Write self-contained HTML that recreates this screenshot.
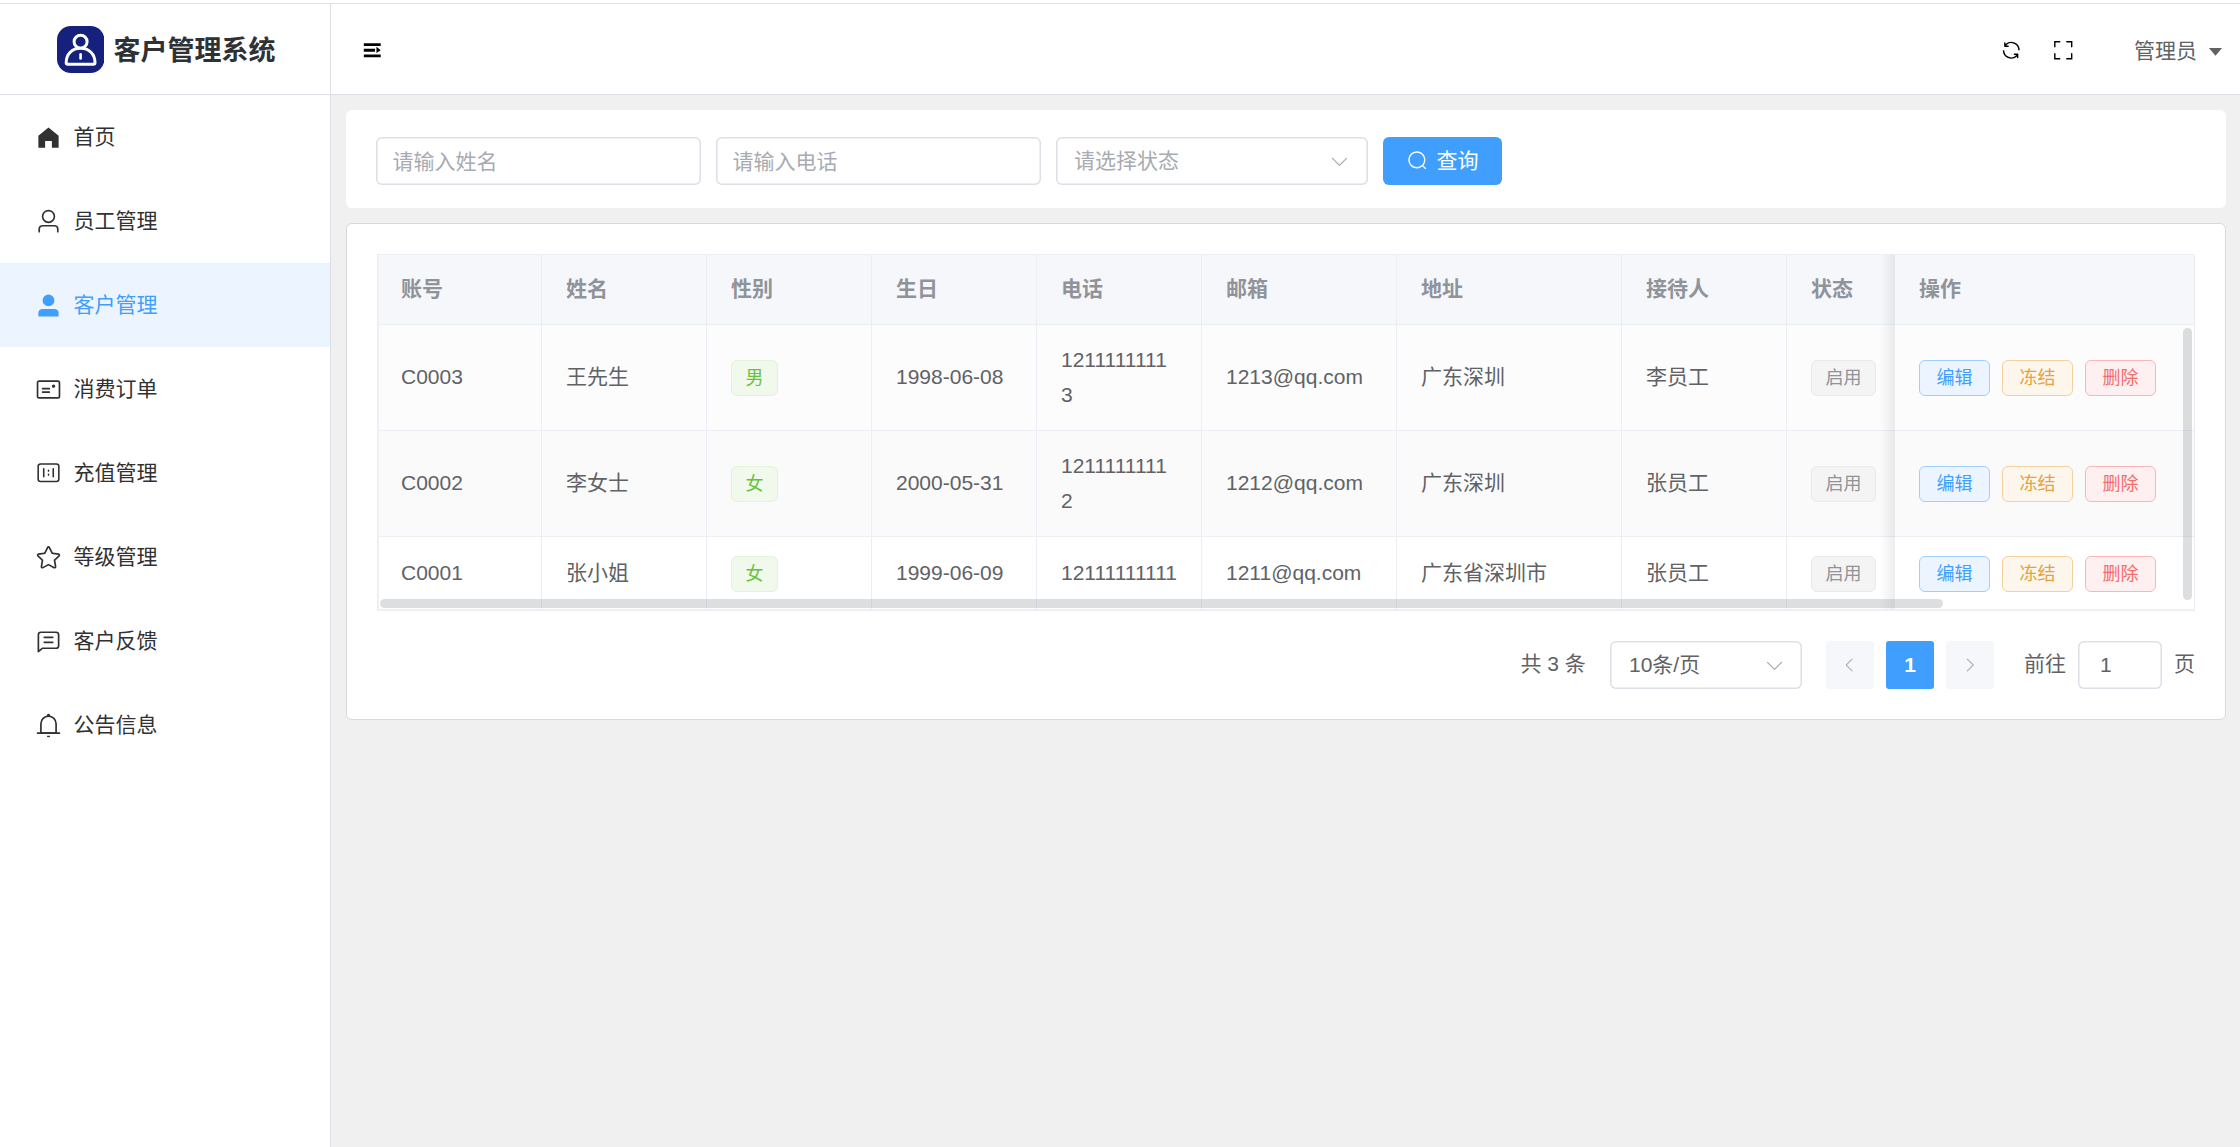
<!DOCTYPE html>
<html lang="zh-CN">
<head>
<meta charset="utf-8">
<title>客户管理系统</title>
<style>
*{box-sizing:border-box;margin:0;padding:0}
html,body{width:2240px;height:1147px;overflow:hidden;background:#fff}
body{font-family:"Liberation Sans","Noto Sans CJK SC",sans-serif;font-size:21px;color:#606266;position:relative}
.abs{position:absolute}
#topline{left:0;top:3px;width:2240px;height:1px;background:#dcdfe6}
#aside{left:0;top:4px;width:331px;height:1143px;background:#fff;border-right:1px solid #dcdfe6}
#logo{left:0;top:0;width:330px;height:91px;border-bottom:1px solid #dcdfe6}
#logo .ico{left:57px;top:21.9px}
#logo .tt{left:113.5px;top:25.5px;font-size:27px;line-height:42px;font-weight:700;color:#303133;white-space:nowrap;letter-spacing:0}
.mi{left:0;width:330px;height:84px;font-size:21px;color:#303133;line-height:84px}
.mi svg{position:absolute;left:35px;top:29px;width:27px;height:27px;fill:currentColor}
.mi span{position:absolute;left:73.5px;top:0px;white-space:nowrap}
.mi.on{background:#ecf5ff;color:#409eff}
#header{left:331px;top:4px;width:1909px;height:91px;background:#fff;border-bottom:1px solid #dcdfe6}
.hi{fill:#000}
#main{left:331px;top:95px;width:1909px;height:1052px;background:#f0f0f0}

#content{left:0;top:0;width:2240px;height:1147px}
.card1{left:346px;top:110px;width:1880px;height:98px;background:#fff;border-radius:6px}
.card2{left:346px;top:223px;width:1880px;height:497px;background:#fff;border:1px solid #d9d9d9;border-radius:6px}
.inp{height:48px;top:137px;box-shadow:inset 0 0 0 1.5px #dcdfe6;border-radius:6px;background:#fff;color:#a8abb2;font-size:21px;line-height:48px;padding-top:1px;padding-left:16.5px;white-space:nowrap}
.btn{left:1383px;top:137px;width:119px;height:48px;border-radius:6px;background:#409eff;color:#fff}
.btn span{position:absolute;left:53.5px;top:0;line-height:48px;font-size:21px;white-space:nowrap}
.tbl{left:377px;top:254px;width:1818px;height:357px;border:1px solid #ebeef5;background:#fff;overflow:hidden}
.tbl:after{content:"";position:absolute;left:0;top:0;right:0;bottom:0;box-shadow:inset 1px 0 0 #eef0f6,inset 0 -1px 0 #eef0f6;pointer-events:none;z-index:5}
.row{left:-1px;width:1817px;border-bottom:1px solid #ebeef5}
.cell{top:0;height:100%;border-right:1px solid #ebeef5;padding-left:24px;display:flex;align-items:center;line-height:34.5px;font-size:21px;color:#606266;white-space:nowrap}
.hd{background:#f5f7fa}
.hd .cell{font-weight:700;color:#909399}
.tag{display:inline-block;height:36px;line-height:34px;padding:0 13.5px;font-size:18px;border-radius:6px;border:1px solid;white-space:nowrap;position:relative;top:0}
.tg{background:#f0f9eb;border-color:#e1f3d8;color:#67c23a}
.ti{background:#f4f4f5;border-color:#e9e9eb;color:#909399}
.fx{left:1518px;width:300px;border-right:none}
.fx:before{content:"";position:absolute;left:-15px;top:0;width:15px;height:101%;background:linear-gradient(to right,rgba(0,0,0,0),rgba(0,0,0,.07))}
.sb{display:inline-block;width:71px;height:36px;line-height:34px;text-align:center;font-size:18px;border-radius:6px;border:1px solid;margin-right:12px;white-space:nowrap;position:relative;top:0}
.bp{background:#ecf5ff;border-color:#a0cfff;color:#409eff}
.bw{background:#fdf6ec;border-color:#f3d19e;color:#e6a23c}
.bd{background:#fef0f0;border-color:#fab6b6;color:#f56c6c}
.hbar{left:2px;top:344px;width:1562.5px;height:8.5px;border-radius:5px;background:rgba(144,147,153,.3)}
.vbar{left:1804.5px;top:72.7px;width:9px;height:272px;border-radius:5px;background:rgba(144,147,153,.3)}
.pg{top:640px;height:48px;line-height:47px;font-size:21px;color:#606266;white-space:nowrap}
.pb{top:641px;width:48px;height:48px;border-radius:3px;background:#f5f7fa}
.pb svg{position:absolute;left:15px;top:15px;width:18px;height:18px;fill:#a8abb2}
</style>
</head>
<body>
<div id="topline" class="abs"></div>

<div id="aside" class="abs">
  <div id="logo" class="abs">
    <svg class="ico abs" viewBox="0 0 47.4 47" width="47.4" height="47"><rect x="0" y="0" width="47.4" height="47" rx="14" ry="14" fill="#15217c"/><circle cx="23.6" cy="15.7" r="6.5" fill="none" stroke="#fff" stroke-width="3"/><path d="M11 38.3H36.2a1.8 1.8 0 0 0 1.8-1.8C38 28 32 22.3 23.6 22.3 15 22.3 9.2 28 9.2 36.5a1.8 1.8 0 0 0 1.8 1.8Z" fill="#15217c" stroke="#fff" stroke-width="3" stroke-linejoin="round"/><path d="M23.6 28.2V32.4" stroke="#fff" stroke-width="2.6" stroke-linecap="round"/></svg>
    <div class="tt abs">客户管理系统</div>
  </div>
  <div class="mi abs" style="top:91px"><svg viewBox="0 0 1024 1024"><path d="M512 128 128 447.936V896h255.936V640H640v256h255.936V447.936z"/></svg><span>首页</span></div>
  <div class="mi abs" style="top:175px"><svg viewBox="0 0 1024 1024"><path d="M512 512a192 192 0 1 0 0-384 192 192 0 0 0 0 384m0 64a256 256 0 1 1 0-512 256 256 0 0 1 0 512m320 320v-96a96 96 0 0 0-96-96H288a96 96 0 0 0-96 96v96a32 32 0 1 1-64 0v-96a160 160 0 0 1 160-160h448a160 160 0 0 1 160 160v96a32 32 0 1 1-64 0"/></svg><span>员工管理</span></div>
  <div class="mi abs on" style="top:259px"><svg viewBox="0 0 1024 1024"><path d="M288 320a224 224 0 1 0 448 0 224 224 0 1 0-448 0m544 608H160a32 32 0 0 1-32-32v-96a160 160 0 0 1 160-160h448a160 160 0 0 1 160 160v96a32 32 0 0 1-32 32z"/></svg><span>客户管理</span></div>
  <div class="mi abs" style="top:343px"><svg viewBox="0 0 1024 1024"><path d="M160 224a32 32 0 0 0-32 32v512a32 32 0 0 0 32 32h704a32 32 0 0 0 32-32V256a32 32 0 0 0-32-32zm0-64h704a96 96 0 0 1 96 96v512a96 96 0 0 1-96 96H160a96 96 0 0 1-96-96V256a96 96 0 0 1 96-96"/><path d="M704 320a64 64 0 1 1 0 128 64 64 0 0 1 0-128M288 448h256q32 0 32 32t-32 32H288q-32 0-32-32t32-32m0 128h256q32 0 32 32t-32 32H288q-32 0-32-32t32-32"/></svg><span>消费订单</span></div>
  <div class="mi abs" style="top:427px"><svg viewBox="0 0 1024 1024"><path d="M813.176 180.706a60.235 60.235 0 0 1 60.236 60.235v481.883a60.235 60.235 0 0 1-60.236 60.235H210.824a60.235 60.235 0 0 1-60.236-60.235V240.94a60.235 60.235 0 0 1 60.236-60.235h602.352zm0-60.235H210.824A120.47 120.47 0 0 0 90.353 240.94v481.883a120.47 120.47 0 0 0 120.47 120.47h602.353a120.47 120.47 0 0 0 120.471-120.47V240.94a120.47 120.47 0 0 0-120.47-120.47zm-120.47 180.705a30.118 30.118 0 0 0-30.118 30.118v301.177a30.118 30.118 0 0 0 60.236 0V331.294a30.118 30.118 0 0 0-30.118-30.118zm-361.412 0a30.118 30.118 0 0 0-30.118 30.118v301.177a30.118 30.118 0 1 0 60.236 0V331.294a30.118 30.118 0 0 0-30.118-30.118M512 361.412a30.118 30.118 0 0 0-30.118 30.117v30.118a30.118 30.118 0 0 0 60.236 0V391.53A30.118 30.118 0 0 0 512 361.412M512 512a30.118 30.118 0 0 0-30.118 30.118v30.117a30.118 30.118 0 0 0 60.236 0v-30.117A30.118 30.118 0 0 0 512 512"/></svg><span>充值管理</span></div>
  <div class="mi abs" style="top:511px"><svg viewBox="0 0 1024 1024"><path d="m512 747.84 228.16 119.936a6.4 6.4 0 0 0 9.28-6.72l-43.52-254.08 184.512-179.904a6.4 6.4 0 0 0-3.52-10.88l-255.104-37.12L517.76 147.904a6.4 6.4 0 0 0-11.52 0L392.192 379.072l-255.104 37.12a6.4 6.4 0 0 0-3.52 10.88L318.08 606.976l-43.584 254.08a6.4 6.4 0 0 0 9.28 6.72zM313.6 924.48a70.4 70.4 0 0 1-102.144-74.24l37.888-220.928L88.96 472.96A70.4 70.4 0 0 1 128 352.896l221.76-32.256 99.2-200.96a70.4 70.4 0 0 1 126.208 0l99.2 200.96 221.824 32.256a70.4 70.4 0 0 1 39.04 120.064L774.72 629.376l37.888 220.928a70.4 70.4 0 0 1-102.144 74.24L512 820.096l-198.4 104.32z"/></svg><span>等级管理</span></div>
  <div class="mi abs" style="top:595px"><svg viewBox="0 0 1024 1024"><path d="M160 826.88 273.536 736H800a64 64 0 0 0 64-64V256a64 64 0 0 0-64-64H224a64 64 0 0 0-64 64zM296 800 147.968 918.4A32 32 0 0 1 96 893.44V256a128 128 0 0 1 128-128h576a128 128 0 0 1 128 128v416a128 128 0 0 1-128 128z"/><path d="M352 512h320q32 0 32 32t-32 32H352q-32 0-32-32t32-32m0-192h320q32 0 32 32t-32 32H352q-32 0-32-32t32-32"/></svg><span>客户反馈</span></div>
  <div class="mi abs" style="top:679px"><svg viewBox="0 0 1024 1024"><path d="M512 64a64 64 0 0 1 64 64v64H448v-64a64 64 0 0 1 64-64"/><path d="M256 768h512V448a256 256 0 1 0-512 0zm256-640a320 320 0 0 1 320 320v384H192V448a320 320 0 0 1 320-320"/><path d="M96 768h832q32 0 32 32t-32 32H96q-32 0-32-32t32-32m352 128h128a64 64 0 0 1-128 0"/></svg><span>公告信息</span></div>
</div>

<div id="header" class="abs">
  <svg class="abs hi" style="left:29.95px;top:34.85px;width:22.5px;height:22.5px" viewBox="0 0 1024 1024"><path d="M128 192h768v128H128zm0 256h512v128H128zm0 256h768v128H128zm576-352 192 160-192 128z"/></svg>
  <svg class="abs hi" style="left:1669.05px;top:34.95px;width:22.5px;height:22.5px" viewBox="0 0 1024 1024"><path d="M771.776 794.88A384 384 0 0 1 128 512h64a320 320 0 0 0 555.712 216.448H654.72a32 32 0 1 1 0-64h149.056a32 32 0 0 1 32 32v148.928a32 32 0 1 1-64 0v-50.56zM276.288 295.616h92.992a32 32 0 0 1 0 64H220.16a32 32 0 0 1-32-32V178.56a32 32 0 0 1 64 0v50.56A384 384 0 0 1 896.128 512h-64a320 320 0 0 0-555.776-216.384z"/></svg>
  <svg class="abs hi" style="left:1721.15px;top:35.25px;width:22.5px;height:22.5px" viewBox="0 0 1024 1024"><path d="m160 96.064 192 .192a32 32 0 0 1 0 64l-192-.192V352a32 32 0 0 1-64 0V96h64zm0 831.872V928H96V672a32 32 0 1 1 64 0v191.936l192-.192a32 32 0 1 1 0 64zM864 96.064V96h64v256a32 32 0 1 1-64 0V160.064l-192 .192a32 32 0 1 1 0-64zm0 831.872-192-.192a32 32 0 0 1 0-64l192 .192V672a32 32 0 1 1 64 0v256h-64z"/></svg>
  <div class="abs" style="left:1803px;top:31px;font-size:21px;line-height:32px;color:#606266;white-space:nowrap">管理员</div>
  <svg class="abs" style="left:1874.3px;top:36.1px;width:21px;height:21px;fill:#606266" viewBox="0 0 1024 1024"><path d="m192 384 320 384 320-384z"/></svg>
</div>

<div id="main" class="abs"></div>
<div id="content" class="abs">
  <div class="card1 abs"></div>
  <div class="inp abs" style="left:376px;width:325px">请输入姓名</div>
  <div class="inp abs" style="left:716px;width:325px">请输入电话</div>
  <div class="inp abs" style="left:1056px;width:312px;padding-left:18px;padding-top:0">请选择状态</div>
  <svg class="abs" style="left:1329px;top:151.2px;width:21px;height:21px;fill:#a8abb2" viewBox="0 0 1024 1024"><path d="M831.872 340.864 512 652.672 192.128 340.864a30.592 30.592 0 0 0-42.752 0 29.12 29.12 0 0 0 0 41.6L489.664 714.24a32 32 0 0 0 44.672 0l340.288-331.712a29.12 29.12 0 0 0 0-41.728 30.592 30.592 0 0 0-42.752 0z"/></svg>
  <div class="btn abs"><svg class="abs" style="left:24px;top:13px;width:21px;height:21px;fill:#fff" viewBox="0 0 1024 1024"><path d="m795.904 750.72 124.992 124.928a32 32 0 0 1-45.248 45.248L750.656 795.904a416 416 0 1 1 45.248-45.248zM480 832a352 352 0 1 0 0-704 352 352 0 0 0 0 704"/></svg><span>查询</span></div>
  <div class="card2 abs"></div>
  <div class="tbl abs">
<div class="row hd abs" style="top:0;height:70px">
<div class="cell abs" style="left:0px;width:165px">账号</div>
<div class="cell abs" style="left:165px;width:165px">姓名</div>
<div class="cell abs" style="left:330px;width:165px">性别</div>
<div class="cell abs" style="left:495px;width:165px">生日</div>
<div class="cell abs" style="left:660px;width:165px">电话</div>
<div class="cell abs" style="left:825px;width:195px">邮箱</div>
<div class="cell abs" style="left:1020px;width:225px">地址</div>
<div class="cell abs" style="left:1245px;width:165px">接待人</div>
<div class="cell abs" style="left:1410px;width:165px">状态</div>
<div class="cell abs fx hd" style="">操作</div>
</div>
<div class="row abs" style="top:70px;height:106px;background:#fcfcfc">
<div class="cell abs" style="left:0px;width:165px">C0003</div>
<div class="cell abs" style="left:165px;width:165px">王先生</div>
<div class="cell abs" style="left:330px;width:165px"><span class="tag tg">男</span></div>
<div class="cell abs" style="left:495px;width:165px">1998-06-08</div>
<div class="cell abs" style="left:660px;width:165px">1211111111<br>3</div>
<div class="cell abs" style="left:825px;width:195px">1213@qq.com</div>
<div class="cell abs" style="left:1020px;width:225px">广东深圳</div>
<div class="cell abs" style="left:1245px;width:165px">李员工</div>
<div class="cell abs" style="left:1410px;width:165px"><span class="tag ti">启用</span></div>
<div class="cell abs fx" style="background:#fcfcfc"><span class="sb bp">编辑</span><span class="sb bw">冻结</span><span class="sb bd">删除</span></div>
</div>
<div class="row abs" style="top:176px;height:106px;background:#fafafa">
<div class="cell abs" style="left:0px;width:165px">C0002</div>
<div class="cell abs" style="left:165px;width:165px">李女士</div>
<div class="cell abs" style="left:330px;width:165px"><span class="tag tg">女</span></div>
<div class="cell abs" style="left:495px;width:165px">2000-05-31</div>
<div class="cell abs" style="left:660px;width:165px">1211111111<br>2</div>
<div class="cell abs" style="left:825px;width:195px">1212@qq.com</div>
<div class="cell abs" style="left:1020px;width:225px">广东深圳</div>
<div class="cell abs" style="left:1245px;width:165px">张员工</div>
<div class="cell abs" style="left:1410px;width:165px"><span class="tag ti">启用</span></div>
<div class="cell abs fx" style="background:#fafafa"><span class="sb bp">编辑</span><span class="sb bw">冻结</span><span class="sb bd">删除</span></div>
</div>
<div class="row abs" style="top:282px;height:74px;background:#fff">
<div class="cell abs" style="left:0px;width:165px">C0001</div>
<div class="cell abs" style="left:165px;width:165px">张小姐</div>
<div class="cell abs" style="left:330px;width:165px"><span class="tag tg">女</span></div>
<div class="cell abs" style="left:495px;width:165px">1999-06-09</div>
<div class="cell abs" style="left:660px;width:165px">12111111111</div>
<div class="cell abs" style="left:825px;width:195px">1211@qq.com</div>
<div class="cell abs" style="left:1020px;width:225px">广东省深圳市</div>
<div class="cell abs" style="left:1245px;width:165px">张员工</div>
<div class="cell abs" style="left:1410px;width:165px"><span class="tag ti">启用</span></div>
<div class="cell abs fx" style="background:#fff"><span class="sb bp">编辑</span><span class="sb bw">冻结</span><span class="sb bd">删除</span></div>
</div>
    <div class="hbar abs"></div>
    <div class="vbar abs"></div>
  </div>
  <div class="pg abs" style="left:1520.5px">共 3 条</div>
  <div class="inp abs" style="left:1610px;top:641px;width:192px;color:#606266;padding-left:19px;padding-top:0">10条/页</div>
  <svg class="abs" style="left:1763.5px;top:654.5px;width:21px;height:21px;fill:#a8abb2" viewBox="0 0 1024 1024"><path d="M831.872 340.864 512 652.672 192.128 340.864a30.592 30.592 0 0 0-42.752 0 29.12 29.12 0 0 0 0 41.6L489.664 714.24a32 32 0 0 0 44.672 0l340.288-331.712a29.12 29.12 0 0 0 0-41.728 30.592 30.592 0 0 0-42.752 0z"/></svg>
  <div class="pb abs" style="left:1826px"><svg viewBox="0 0 1024 1024"><path d="M609.408 149.376 277.76 489.6a32 32 0 0 0 0 44.672l331.648 340.352a29.12 29.12 0 0 0 41.728 0 30.592 30.592 0 0 0 0-42.752L339.264 511.936l311.872-319.872a30.592 30.592 0 0 0 0-42.688 29.12 29.12 0 0 0-41.728 0z"/></svg></div>
  <div class="pb abs" style="left:1886px;background:#409eff;color:#fff;font-weight:700;font-size:21px;text-align:center;line-height:48px">1</div>
  <div class="pb abs" style="left:1946px"><svg viewBox="0 0 1024 1024"><path d="M340.864 149.312a30.592 30.592 0 0 0 0 42.752L652.736 512 340.864 831.872a30.592 30.592 0 0 0 0 42.752 29.12 29.12 0 0 0 41.728 0L714.24 534.336a32 32 0 0 0 0-44.672L382.592 149.376a29.12 29.12 0 0 0-41.728 0z"/></svg></div>
  <div class="pg abs" style="left:2024px">前往</div>
  <div class="inp abs" style="left:2078px;top:641px;width:84px;color:#606266;padding-left:22px;padding-top:0">1</div>
  <div class="pg abs" style="left:2174px">页</div>
</div>
</body>
</html>
